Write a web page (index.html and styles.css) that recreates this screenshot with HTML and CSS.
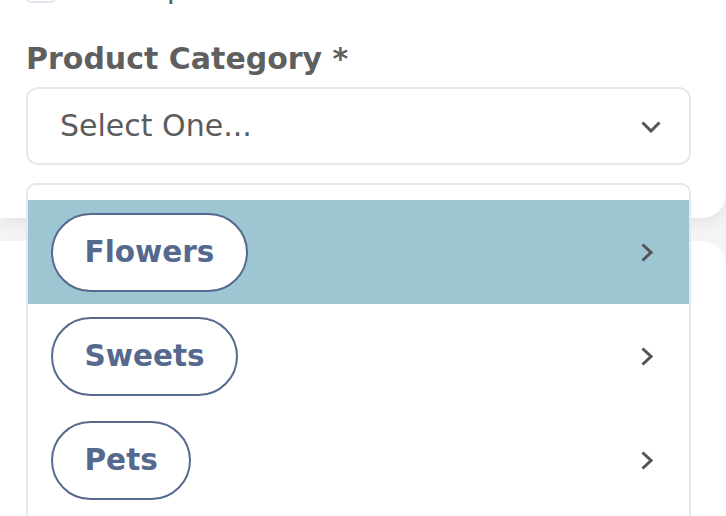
FILE: index.html
```html
<!DOCTYPE html>
<html lang="en">
<head>
<meta charset="utf-8">
<title>Product Category</title>
<link rel="stylesheet" href="styles.css">
</head>
<body>
  <section class="top-card">
    <label class="check-row">
      <span class="checkbox"></span>
      <span class="check-text">Has Options</span>
    </label>
    <div class="field-label">Product Category *</div>
    <div class="select-wrap">
      <div class="select">
        <span class="select-text">Select One...</span>
        <svg class="chev-down" width="20" height="12" viewBox="0 0 20 12"><polyline points="1.5,1.5 10,10 18.5,1.5" fill="none" stroke="#555" stroke-width="3"/></svg>
      </div>
      <ul class="dropdown">
        <li class="option active">
          <span class="pill">Flowers</span>
          <svg class="chev-right" width="12" height="19" viewBox="0 0 12 19"><polyline points="1.5,1.5 10,9.5 1.5,17.5" fill="none" stroke="#555" stroke-width="3"/></svg>
        </li>
        <li class="option">
          <span class="pill">Sweets</span>
          <svg class="chev-right" width="12" height="19" viewBox="0 0 12 19"><polyline points="1.5,1.5 10,9.5 1.5,17.5" fill="none" stroke="#555" stroke-width="3"/></svg>
        </li>
        <li class="option">
          <span class="pill">Pets</span>
          <svg class="chev-right" width="12" height="19" viewBox="0 0 12 19"><polyline points="1.5,1.5 10,9.5 1.5,17.5" fill="none" stroke="#555" stroke-width="3"/></svg>
        </li>
      </ul>
    </div>
  </section>
  <section class="bottom-card"></section>
</body>
</html>
```
FILE: styles.css
```css
html, body {
  margin: 0;
  padding: 0;
  overflow: hidden;
  height: 100%;
}
body {
  background: #f4f4f4;
  font-family: "DejaVu Sans", "Liberation Sans", sans-serif;
  color: #5f5f5f;
}
.top-card {
  position: relative;
  z-index: 2;
  background: #fff;
  padding: 0 35px 53px 26px;
  border-bottom-right-radius: 24px;
  box-shadow: 0 5px 16px rgba(0, 0, 0, 0.07);
}
.check-row {
  display: flex;
  align-items: center;
  gap: 21px;
  height: 36px;
  margin-top: -30px;
  font-size: 30px;
  line-height: 36px;
}
.checkbox {
  width: 26px;
  height: 26px;
  border: 2px solid #e2e6ee;
  border-radius: 5px;
  flex: none;
}
.check-text {
  color: #5f5f5f;
}
.field-label {
  margin-top: 35px;
  font-size: 30px;
  line-height: 36px;
  font-weight: 700;
  color: #5f5f5f;
}
.select-wrap {
  position: relative;
  margin-top: 10px;
}
.select {
  height: 74px;
  border: 2px solid #e4e8ee;
  border-radius: 12px;
  display: flex;
  align-items: center;
  justify-content: space-between;
  padding: 0 28px 0 32px;
}
.select-text {
  font-size: 30px;
  line-height: 36px;
  color: #5c5c5c;
}
.chev-down {
  display: block;
  margin-top: 1px;
}
.dropdown {
  position: absolute;
  left: 0;
  right: 0;
  top: calc(100% + 18px);
  margin: 0;
  padding: 15px 0 60px;
  list-style: none;
  background: #fff;
  border: 2px solid #e4e8ee;
  border-radius: 10px;
}
.option {
  height: 104px;
  display: flex;
  align-items: center;
  justify-content: space-between;
  padding: 0 36px 0 23px;
}
.option.active {
  background: #9dc6d2;
}
.pill {
  display: flex;
  align-items: center;
  height: 75px;
  padding: 0 31.5px;
  border: 2px solid #56698f;
  border-radius: 40px;
  background: #fff;
  color: #55698f;
  font-size: 29.5px;
  font-weight: 700;
}
.chev-right {
  display: block;
}
.bottom-card {
  margin-top: 23px;
  height: 400px;
  background: #fff;
  border-top-right-radius: 24px;
}
```
